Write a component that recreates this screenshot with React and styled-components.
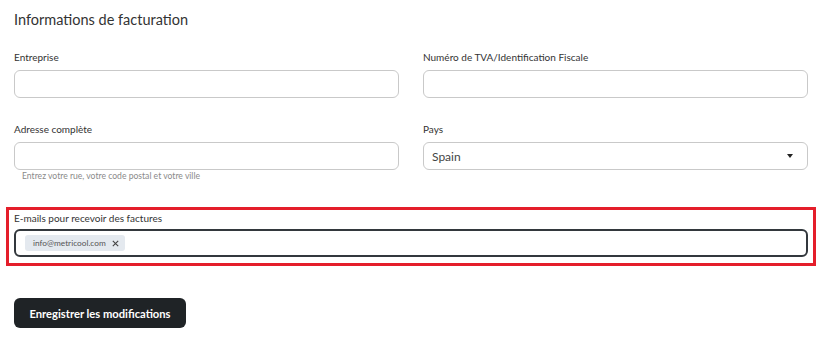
import React from "react";
import styled, { createGlobalStyle } from "styled-components";

const Global = createGlobalStyle`
  * { box-sizing: border-box; }
  body { margin: 0; background: #fff; font-family: "Lato", "Noto Sans", sans-serif; color: #333; }
`;

const Page = styled.div`
  width: 831px;
  height: 339px;
  padding: 10px 23px 0 14px;
  display: flex;
  flex-direction: column;
`;

const Title = styled.h2`
  margin: 0 0 20px;
  font-size: 14.5px;
  line-height: 20px;
  font-weight: 400;
  color: #333;
`;

const Grid = styled.div`
  display: grid;
  grid-template-columns: 385px 385px;
  column-gap: 24px;
  row-gap: 24px;
`;

const Field = styled.div`
  display: flex;
  flex-direction: column;
`;

const Label = styled.label`
  font-size: 10px;
  line-height: 14px;
  color: #333;
  margin-bottom: ${(p) => p.$gap || 6}px;
`;

const Input = styled.div`
  height: 28px;
  border: 1px solid #c9c9c9;
  border-radius: 6px;
  background: #fff;
  display: flex;
  align-items: center;
  padding: 0 10px 0 8px;
  font-size: 12px;
  color: #444;
`;

const SelectBox = styled(Input)`
  justify-content: space-between;
  padding-right: 14px;
`;

const Caret = styled.span`
  width: 0;
  height: 0;
  border-left: 3.5px solid transparent;
  border-right: 3.5px solid transparent;
  border-top: 4px solid #222;
`;

const Helper = styled.div`
  margin-top: 1px;
  padding-left: 8px;
  font-size: 8.6px;
  line-height: 10px;
  color: #8a8a8a;
`;

const Highlight = styled.div`
  margin: 26px -8px 0;
  border: 3px solid #e41e2a;
  padding: 1px 5px 6px;
  display: flex;
  flex-direction: column;
`;

const TagInput = styled.div`
  height: 28px;
  border: 2px solid #33383d;
  border-radius: 6px;
  display: flex;
  align-items: center;
  padding-left: 9px;
`;

const Chip = styled.span`
  height: 16px;
  width: 100px;
  border-radius: 3px;
  background: #e4e9ef;
  display: inline-flex;
  align-items: center;
  justify-content: space-between;
  padding: 0 6px 0 8px;
  font-size: 8.3px;
  color: #555;
`;

const Button = styled.button`
  margin-top: 32px;
  align-self: flex-start;
  width: 172px;
  height: 30px;
  border: none;
  border-radius: 6px;
  background: #1f2326;
  color: #fff;
  font-family: inherit;
  font-size: 11.2px;
  font-weight: 700;
`;

export default function App() {
  return (
    <>
      <Global />
      <Page>
        <Title>Informations de facturation</Title>
        <Grid>
          <Field>
            <Label>Entreprise</Label>
            <Input />
          </Field>
          <Field>
            <Label>Numéro de TVA/Identification Fiscale</Label>
            <Input />
          </Field>
          <Field>
            <Label>Adresse complète</Label>
            <Input />
            <Helper>Entrez votre rue, votre code postal et votre ville</Helper>
          </Field>
          <Field>
            <Label>Pays</Label>
            <SelectBox>
              <span>Spain</span>
              <Caret />
            </SelectBox>
          </Field>
        </Grid>
        <Highlight>
          <Label $gap={4}>E-mails pour recevoir des factures</Label>
          <TagInput>
            <Chip>
              <span>info@metricool.com</span>
              <svg width="7" height="7" viewBox="0 0 7 7">
                <path d="M0.8 0.8 L6.2 6.2 M6.2 0.8 L0.8 6.2" stroke="#444" strokeWidth="1.1" />
              </svg>
            </Chip>
          </TagInput>
        </Highlight>
        <Button>Enregistrer les modifications</Button>
      </Page>
    </>
  );
}
